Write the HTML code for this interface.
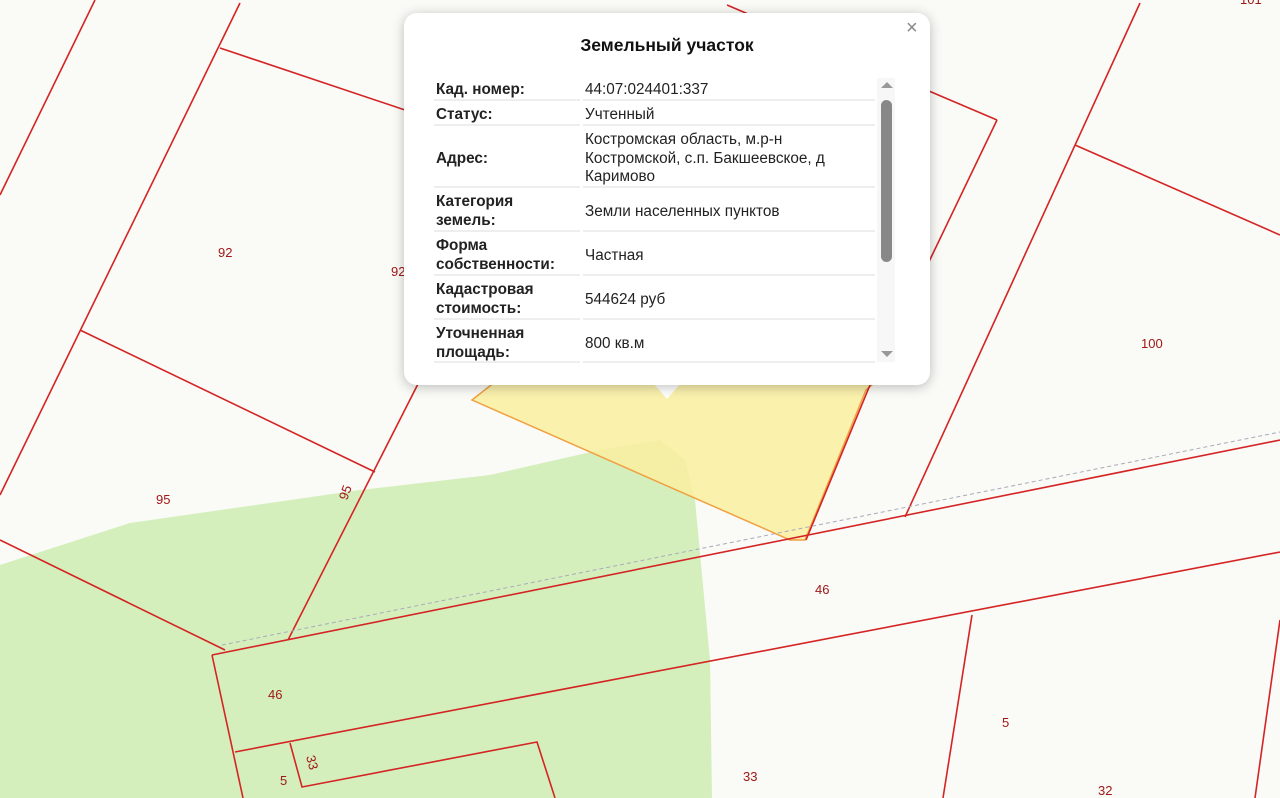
<!DOCTYPE html>
<html><head><meta charset="utf-8"><style>
body{margin:0;width:1280px;height:798px;overflow:hidden;background:#fafaf6;font-family:"Liberation Sans",sans-serif;position:relative}
svg{position:absolute;left:0;top:0}
.pop{position:absolute;left:404px;top:13px;width:526px;height:372px;background:#fff;border-radius:13px;box-shadow:0 2px 12px rgba(0,0,0,.25)}
.tip{position:absolute;left:654px;top:384px;width:0;height:0;border-left:13px solid transparent;border-right:13px solid transparent;border-top:15px solid #fff}
.title{position:absolute;left:0;width:526px;top:22px;text-align:center;font-weight:bold;font-size:17.5px;color:#111}
.x{position:absolute;left:502px;top:4px;font-size:20px;color:#888}
.t{position:absolute;font-size:15.3px;line-height:18.5px;color:#222;white-space:nowrap;margin-top:2px}
.b{font-weight:bold}
.ln{position:absolute;height:2px;background:#eee}
.sb{position:absolute;left:877px;top:78px;width:18px;height:284px;background:#f7f7f7}
.th{position:absolute;left:881px;top:100px;width:11px;height:162px;background:#888;border-radius:6px}
.lbl{position:absolute;font-size:13px;color:#a01818}
</style></head><body>
<svg width="1280" height="798">
<polygon points="0,565 130,523 360,490 490,475 600,450 660,440 685,460 695,500 710,660 712,798 0,798" fill="#d4efbc"/>
<polygon points="472,400 500,378 880,378 866,390 805,540 790,540" fill="#f9eea0" fill-opacity=".85" stroke="#f0a040" stroke-width="1.5"/>
<g stroke="#d42424" stroke-width="1.6" fill="none">
<line x1="95" y1="0" x2="0" y2="195"/>
<line x1="240" y1="3" x2="0" y2="495"/>
<line x1="220" y1="48" x2="405" y2="110"/>
<line x1="80" y1="330" x2="375" y2="472"/>
<line x1="288" y1="640" x2="420" y2="380"/>
<line x1="0" y1="540" x2="225" y2="650"/>
<line x1="212" y1="655" x2="1280" y2="440"/>
<line x1="235" y1="752" x2="1280" y2="552"/>
<line x1="212" y1="655" x2="243" y2="798"/>
<line x1="1140" y1="3" x2="905" y2="517"/>
<line x1="1075" y1="145" x2="1280" y2="235"/>
<line x1="727" y1="5" x2="997" y2="120"/>
<line x1="997" y1="120" x2="925" y2="270"/>
<line x1="1280" y1="620" x2="1255" y2="798"/>
<line x1="972" y1="615" x2="943" y2="798"/>
<polyline points="290,743 302,787 537,742 555,798"/>
<line x1="870" y1="385" x2="806" y2="540"/>
</g>
<line x1="222" y1="645" x2="1280" y2="432" stroke="#aab" stroke-width="1" stroke-dasharray="4,3"/>
</svg>
<div class="lbl" style="left:218px;top:245px">92</div>
<div class="lbl" style="left:391px;top:264px">92</div>
<div class="lbl" style="left:156px;top:492px">95</div>
<div class="lbl" style="left:338px;top:485px;transform:rotate(-70deg)">95</div>
<div class="lbl" style="left:1141px;top:336px">100</div>
<div class="lbl" style="left:815px;top:582px">46</div>
<div class="lbl" style="left:268px;top:687px">46</div>
<div class="lbl" style="left:1002px;top:715px">5</div>
<div class="lbl" style="left:743px;top:769px">33</div>
<div class="lbl" style="left:1098px;top:783px">32</div>
<div class="lbl" style="left:305px;top:755px;transform:rotate(75deg)">33</div>
<div class="lbl" style="left:280px;top:773px">5</div>
<div class="lbl" style="left:1240px;top:-8px">101</div>
<div class="tip"></div>
<div class="pop">
<div class="title">Земельный участок</div>
<div class="x">×</div>
</div>
<div class="t b" style="left:436px;top:79px">Кад. номер:</div>
<div class="t" style="left:585px;top:79px">44:07:024401:337</div>
<div class="ln" style="left:434px;top:99px;width:146px"></div><div class="ln" style="left:583px;top:99px;width:292px"></div>
<div class="t b" style="left:436px;top:104px">Статус:</div>
<div class="t" style="left:585px;top:104px">Учтенный</div>
<div class="ln" style="left:434px;top:124px;width:146px"></div><div class="ln" style="left:583px;top:124px;width:292px"></div>
<div class="t b" style="left:436px;top:148px">Адрес:</div>
<div class="t" style="left:585px;top:129px">Костромская область, м.р-н<br>Костромской, с.п. Бакшеевское, д<br>Каримово</div>
<div class="ln" style="left:434px;top:186px;width:146px"></div><div class="ln" style="left:583px;top:186px;width:292px"></div>
<div class="t b" style="left:436px;top:191px">Категория<br>земель:</div>
<div class="t" style="left:585px;top:201px">Земли населенных пунктов</div>
<div class="ln" style="left:434px;top:230px;width:146px"></div><div class="ln" style="left:583px;top:230px;width:292px"></div>
<div class="t b" style="left:436px;top:235px">Форма<br>собственности:</div>
<div class="t" style="left:585px;top:245px">Частная</div>
<div class="ln" style="left:434px;top:274px;width:146px"></div><div class="ln" style="left:583px;top:274px;width:292px"></div>
<div class="t b" style="left:436px;top:279px">Кадастровая<br>стоимость:</div>
<div class="t" style="left:585px;top:289px">544624 руб</div>
<div class="ln" style="left:434px;top:318px;width:146px"></div><div class="ln" style="left:583px;top:318px;width:292px"></div>
<div class="t b" style="left:436px;top:323px">Уточненная<br>площадь:</div>
<div class="t" style="left:585px;top:333px">800 кв.м</div>
<div class="ln" style="left:434px;top:361px;width:146px"></div><div class="ln" style="left:583px;top:361px;width:292px"></div>
<div class="sb"></div><div class="th"></div>
<div style="position:absolute;left:881px;top:82px;border-left:6px solid transparent;border-right:6px solid transparent;border-bottom:6px solid #999"></div>
<div style="position:absolute;left:881px;top:351px;border-left:6px solid transparent;border-right:6px solid transparent;border-top:6px solid #999"></div>
</body></html>
